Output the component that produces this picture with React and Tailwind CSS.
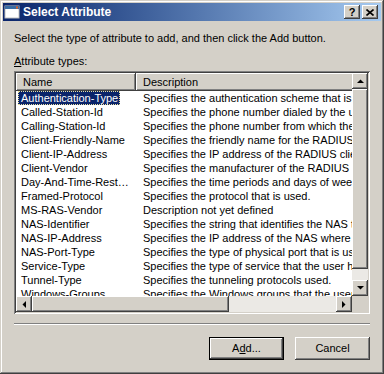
import React from 'react';

const raised = "shadow-[inset_-1px_-1px_#404040,inset_1px_1px_#ffffff,inset_-2px_-2px_#808080,inset_2px_2px_#d4d0c8]";
const sunken = "shadow-[inset_1px_1px_#808080,inset_-1px_-1px_#ffffff,inset_2px_2px_#404040,inset_-2px_-2px_#d4d0c8]";

const rows = [
  ["Authentication-Type", "Specifies the authentication scheme that is used to verify the user."],
  ["Called-Station-Id", "Specifies the phone number dialed by the user."],
  ["Calling-Station-Id", "Specifies the phone number from which the call originated."],
  ["Client-Friendly-Name", "Specifies the friendly name for the RADIUS client."],
  ["Client-IP-Address", "Specifies the IP address of the RADIUS client."],
  ["Client-Vendor", "Specifies the manufacturer of the RADIUS proxy or NAS."],
  ["Day-And-Time-Restrictions", "Specifies the time periods and days of week during which"],
  ["Framed-Protocol", "Specifies the protocol that is used."],
  ["MS-RAS-Vendor", "Description not yet defined"],
  ["NAS-Identifier", "Specifies the string that identifies the NAS that originated"],
  ["NAS-IP-Address", "Specifies the IP address of the NAS where the request originates."],
  ["NAS-Port-Type", "Specifies the type of physical port that is used by the NAS."],
  ["Service-Type", "Specifies the type of service that the user has requested."],
  ["Tunnel-Type", "Specifies the tunneling protocols used."],
  ["Windows-Groups", "Specifies the Windows groups that the user belongs to."],
];

const Arrow = ({ dir }) => {
  const pts = {
    up: "0,4 7,4 3.5,0.5",
    down: "0,0 7,0 3.5,3.5",
    left: "4,0 4,7 0.5,3.5",
    right: "0,0 0,7 3.5,3.5",
  }[dir];
  const vertical = dir === "up" || dir === "down";
  return (
    <div className={`w-[16px] h-[16px] shrink-0 bg-[#d4d0c8] flex items-center justify-center ${raised}`}>
      <svg width={vertical ? 7 : 4} height={vertical ? 4 : 7} viewBox={vertical ? "0 0 7 4" : "0 0 4 7"}>
        <polygon points={pts} fill="#000" />
      </svg>
    </div>
  );
};

const Underlined = ({ before, letter, after }) => (
  <>
    {before}<span className="underline underline-offset-[1px]">{letter}</span>{after}
  </>
);

export default function App() {
  return (
    <div className={`w-[384px] h-[374px] bg-[#d4d0c8] p-[3px] flex flex-col text-[11px] text-black shadow-[inset_-1px_-1px_#404040,inset_1px_1px_#d4d0c8,inset_-2px_-2px_#808080,inset_2px_2px_#ffffff]`} style={{ fontFamily: '"Liberation Sans", Arial, sans-serif' }}>
      {/* title bar */}
      <div className="h-[18px] shrink-0 flex items-center bg-linear-to-r from-[#0a246a] to-[#a6caf0]">
        <svg width="16" height="16" viewBox="0 0 16 16" className="ml-[1px] shrink-0">
          <rect x="1" y="2" width="14" height="12" fill="#fff" stroke="#c0c0c0" />
          <rect x="1" y="2" width="14" height="3" fill="#3a6ea5" />
          <rect x="12" y="2.5" width="2" height="2" fill="#e06020" />
        </svg>
        <span className="ml-[3px] font-bold text-white text-[12px] leading-[18px]">Select Attribute</span>
        <div className="ml-auto mr-[3px] flex gap-[2px]">
          <div className={`w-[16px] h-[14px] bg-[#d4d0c8] flex items-center justify-center font-bold text-[11px] leading-none ${raised}`}>?</div>
          <div className={`w-[16px] h-[14px] bg-[#d4d0c8] flex items-center justify-center ${raised}`}>
            <svg width="8" height="7" viewBox="0 0 8 7">
              <path d="M0.5 0.5 L7.5 6.5 M7.5 0.5 L0.5 6.5" stroke="#000" strokeWidth="1.6" />
            </svg>
          </div>
        </div>
      </div>

      {/* body */}
      <div className="flex-1 px-[11px] flex flex-col">
        <p className="mt-[11px] leading-[13px]">Select the type of attribute to add, and then click the Add button.</p>
        <p className="mt-[10px] leading-[13px]">
          <Underlined before="" letter="A" after="ttribute types:" />
        </p>

        <div className={`mt-[3px] h-[243px] p-[2px] bg-white ${sunken}`}>
          <div className="h-full grid grid-cols-[1fr_16px] grid-rows-[1fr_16px] bg-white">
            <div className="overflow-hidden flex flex-col">
              <div className="h-[18px] shrink-0 flex bg-[#d4d0c8]">
                <div className={`w-[120px] shrink-0 pl-[7px] leading-[18px] ${raised}`}>Name</div>
                <div className={`w-[300px] shrink-0 pl-[7px] leading-[18px] ${raised}`}>Description</div>
                <div className={`flex-1 ${raised}`}></div>
              </div>
              {rows.map(([name, desc], i) => (
                <div key={name} className="h-[14px] shrink-0 flex leading-[14px]">
                  <div className="w-[120px] shrink-0 px-[2px]">
                    <span className={`inline-block max-w-full align-top truncate pl-[3px] pr-[2px] ${i === 0 ? "bg-[#0a246a] text-white outline outline-1 outline-dotted outline-[#e8e0a0] -outline-offset-1" : ""}`}>{name}</span>
                  </div>
                  <div className="pl-[7px] whitespace-nowrap">{desc}</div>
                </div>
              ))}
            </div>

            {/* vertical scrollbar */}
            <div className="flex flex-col bg-[#ebe9e5]">
              <Arrow dir="up" />
              <div className={`h-[180px] shrink-0 bg-[#d4d0c8] ${raised}`}></div>
              <div className="flex-1"></div>
              <Arrow dir="down" />
            </div>

            {/* horizontal scrollbar */}
            <div className="flex bg-[#ebe9e5]">
              <Arrow dir="left" />
              <div className={`w-[197px] shrink-0 bg-[#d4d0c8] ${raised}`}></div>
              <div className="flex-1"></div>
              <Arrow dir="right" />
            </div>
            <div className="bg-[#d4d0c8]"></div>
          </div>
        </div>

        <div className="mt-[9px] h-[2px] border-t border-b border-t-[#808080] border-b-white"></div>

        <div className="mt-[12px] flex justify-end gap-[11px]">
          <div className="w-[75px] h-[23px] border border-black">
            <div className={`w-full h-full bg-[#d4d0c8] flex items-center justify-center ${raised}`}>
              <Underlined before="A" letter="d" after="d..." />
            </div>
          </div>
          <div className={`w-[75px] h-[23px] bg-[#d4d0c8] flex items-center justify-center ${raised}`}>Cancel</div>
        </div>
      </div>
    </div>
  );
}
